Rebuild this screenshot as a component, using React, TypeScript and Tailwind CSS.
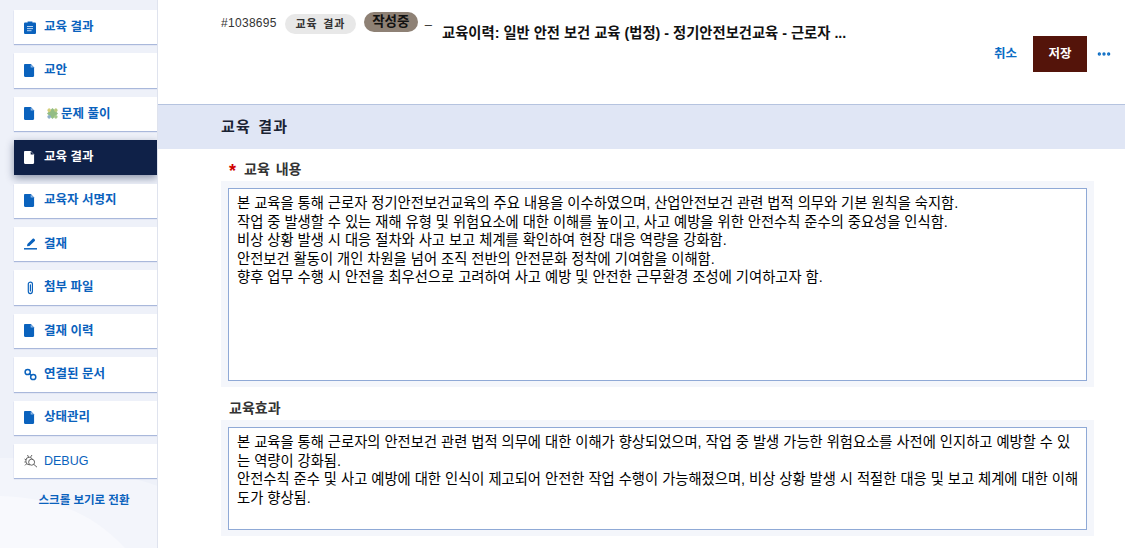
import { MoreHorizontal } from "lucide-react";
import type { ReactNode } from "react";

const font = "font-['Liberation_Sans','Noto_Sans_CJK_KR',sans-serif]";

function FileIcon({ active }: { active?: boolean }) {
  return (
    <svg viewBox="0 0 12 14" className={`w-[11px] h-[13px] ${active ? "fill-white" : "fill-[#0a62bd]"}`}>
      <path d="M1.2 0H7.5L11 3.6V12.8C11 13.5 10.5 14 9.8 14H1.2C.5 14 0 13.5 0 12.8V1.2C0 .5.5 0 1.2 0Z" />
      <path d="M7.3 .4V3.8H10.7Z" className={active ? "fill-[#0f2148]" : "fill-[#8fb6e4]"} />
    </svg>
  );
}

const file = <FileIcon />;

const menu: { label: ReactNode; icon: ReactNode; active?: boolean; debug?: boolean }[] = [
  {
    label: "교육 결과",
    icon: (
      <svg viewBox="0 0 12 13" className="w-[12px] h-[13px]">
        <path d="M1.3 1.6H3.6V.6H8.4V1.6H10.7C11.4 1.6 12 2.1 12 2.8V11.7C12 12.4 11.4 13 10.7 13H1.3C.6 13 0 12.4 0 11.7V2.8C0 2.1.6 1.6 1.3 1.6Z" fill="#0a62bd" />
        <path d="M3 5.5H9M3 7.6H9M3 9.7H7.5" stroke="#b9d3f0" strokeWidth="1" />
      </svg>
    ),
  },
  { label: "교안", icon: file },
  {
    label: (
      <span className="flex items-center">
        <svg viewBox="0 0 13 13" className="w-[13px] h-[13px] ml-[2px] mr-[2px]">
          <g transform="rotate(45 6.5 6.5)">
            <rect x="2.6" y="2.6" width="7.8" height="7.8" fill="#93bd84" />
            <circle cx="6.5" cy="1.8" r="1.8" fill="#b9c97e" />
            <circle cx="11.2" cy="6.5" r="1.8" fill="#a5c98a" />
            <circle cx="6.5" cy="11.2" r="1.8" fill="#8db0c8" />
            <circle cx="1.8" cy="6.5" r="1.8" fill="#d3cf7c" />
          </g>
        </svg>
        문제 풀이
      </span>
    ),
    icon: file,
  },
  { label: "교육 결과", icon: <FileIcon active />, active: true },
  { label: "교육자 서명지", icon: file },
  {
    label: "결재",
    icon: (
      <svg viewBox="0 0 13 12" className="w-[13px] h-[12px]">
        <path d="M3 8.3 3.4 6 8.7.8C9.1.4 9.6.4 10 .8L10.8 1.6C11.2 2 11.2 2.5 10.8 2.9L5.4 8Z" fill="#0a62bd" />
        <path d="M0 10.8H13" stroke="#0a62bd" strokeWidth="1.5" />
      </svg>
    ),
  },
  {
    label: "첨부 파일",
    icon: (
      <svg viewBox="0 0 10 14" className="w-[10px] h-[14px] ml-[1px]" fill="none" stroke="#0a62bd" strokeWidth="1.2" strokeLinecap="round">
        <path d="M3.3 3.8V10.3C3.3 11.4 4 12.6 5.2 12.6S7.4 11.4 7.4 10.3V3C7.4 1.9 6.6 1.1 5.5 1.1S3.3 1.9 3.3 3V3.8M5.4 3.8V10" />
      </svg>
    ),
  },
  { label: "결재 이력", icon: file },
  {
    label: "연결된 문서",
    icon: (
      <svg viewBox="0 0 13 13" className="w-[13px] h-[13px]" fill="none" stroke="#0a62bd" strokeWidth="1.5">
        <circle cx="3.7" cy="4" r="2.6" />
        <circle cx="9.2" cy="9" r="2.6" />
        <path d="M5 5.2 7.8 7.8" />
      </svg>
    ),
  },
  { label: "상태관리", icon: file },
  {
    label: "DEBUG",
    icon: (
      <svg viewBox="0 0 14 14" className="w-[14px] h-[14px]" fill="none" stroke="#555" strokeWidth="0.9">
        <ellipse cx="5.2" cy="7" rx="3.4" ry="3.8" />
        <circle cx="7.6" cy="8.2" r="3" fill="#fff" />
        <path d="M9.8 10.4 13 13.2M3.5 1 4.5 3M8 1 6.6 3M.6 5 2 5.8M.4 8H1.8M1 11.4 2.4 10" />
      </svg>
    ),
    debug: true,
  },
];

const content1 = `본 교육을 통해 근로자 정기안전보건교육의 주요 내용을 이수하였으며, 산업안전보건 관련 법적 의무와 기본 원칙을 숙지함.
작업 중 발생할 수 있는 재해 유형 및 위험요소에 대한 이해를 높이고, 사고 예방을 위한 안전수칙 준수의 중요성을 인식함.
비상 상황 발생 시 대응 절차와 사고 보고 체계를 확인하여 현장 대응 역량을 강화함.
안전보건 활동이 개인 차원을 넘어 조직 전반의 안전문화 정착에 기여함을 이해함.
향후 업무 수행 시 안전을 최우선으로 고려하여 사고 예방 및 안전한 근무환경 조성에 기여하고자 함.`;

const content2 = `본 교육을 통해 근로자의 안전보건 관련 법적 의무에 대한 이해가 향상되었으며, 작업 중 발생 가능한 위험요소를 사전에 인지하고 예방할 수 있는 역량이 강화됨.
안전수칙 준수 및 사고 예방에 대한 인식이 제고되어 안전한 작업 수행이 가능해졌으며, 비상 상황 발생 시 적절한 대응 및 보고 체계에 대한 이해도가 향상됨.`;

function Sidebar() {
  return (
    <aside className="relative w-[158px] h-[548px] shrink-0 bg-[#eef1f9] border-r border-[#dfe3ee] pt-[10px] pl-[14px] overflow-hidden">
      <svg viewBox="0 0 158 90" className="absolute left-0 bottom-0 w-[158px] h-[90px]" preserveAspectRatio="none">
        <path d="M0 0C40 -4 90 6 158 28V90H0Z" fill="#f3f5fb" />
        <path d="M0 38C50 40 90 52 125 90H0Z" fill="#f8f9fd" />
      </svg>
      <nav className="relative flex flex-col gap-[9px]">
        {menu.map((item, i) => (
          <a
            key={i}
            className={`flex items-center h-[34.4px] pl-[10px] text-[12.5px] font-bold ${
              item.active
                ? "bg-[#0f2148] text-white shadow-[0_3px_8px_rgba(15,33,72,0.45)]"
                : "bg-white text-[#0a62bd] shadow-[0_1px_1px_#a9b8db]"
            } ${item.debug ? "font-normal" : ""}`}
          >
            <span className="w-[20px] flex justify-start items-center">{item.icon}</span>
            {item.label}
          </a>
        ))}
      </nav>
      <p className="relative text-center text-[11.5px] font-bold text-[#0a62bd] mt-[14px] pr-[3px]">스크롤 보기로 전환</p>
    </aside>
  );
}

function Field({ label, required, value, height }: { label: string; required?: boolean; value: string; height: string }) {
  return (
    <div>
      <label className="flex items-center h-[20px] pb-[2px] pl-[8px] text-[14px] font-bold text-[#333] [word-spacing:2px]">
        {required && <span className="text-[#d00000] text-[18px] mr-[8px] leading-none mt-[3px]">*</span>}
        {label}
      </label>
      <div className="mt-[1px] bg-[#f4f6fb] p-[7px] pb-[6px]">
        <textarea
          readOnly
          defaultValue={value}
          className={`block w-full ${height} resize-none bg-white border border-[#8fa9d6] pl-[8px] pr-[6px] py-[5px] text-[14.3px] leading-[18.5px] text-black outline-none overflow-hidden`}
        />
      </div>
    </div>
  );
}

export default function App() {
  return (
    <div className={`flex w-[1125px] h-[548px] overflow-hidden bg-white ${font}`}>
      <Sidebar />
      <main className="flex-1 min-w-0">
        <header className="h-[104px] pl-[63px] pr-[13px] pt-[12px]">
          <div className="flex items-start">
            <span className="text-[12px] text-[#333] mt-[2px] tracking-[0.3px]">#1038695</span>
            <span className="ml-[8px] mt-[2px] h-[20px] w-[71px] rounded-full bg-[#e8e8e8] flex items-center justify-center text-[11px] font-bold text-[#333] tracking-[0.8px] [word-spacing:2px]">
              교육 결과
            </span>
            <span className="ml-[8px] h-[20px] w-[54px] rounded-full bg-[#8e8175] flex items-center justify-center text-[13.5px] font-bold text-[#111]">
              작성중
            </span>
            <span className="ml-[7px] text-[13px] text-[#333] mt-[3px]">–</span>
            <h1 className="ml-[10px] mt-[12px] text-[14.3px] leading-[18px] font-bold text-[#111]">
              교육이력: 일반 안전 보건 교육 (법정) - 정기안전보건교육 - 근로자 ...
            </h1>
          </div>
          <div className="flex items-center justify-end mt-[-6px]">
            <button className="text-[12.5px] font-bold text-[#0a6cc4] mr-[16px]">취소</button>
            <button className="w-[54px] h-[36px] bg-[#54140a] text-white text-[12.5px] font-bold">저장</button>
            <MoreHorizontal size={16} strokeWidth={3} className="text-[#0a6cc4] ml-[9px]" />
          </div>
        </header>
        <div className="h-[45px] bg-[#e0e6f5] border-t border-[#b5c3df] flex items-center pl-[63px] text-[15px] font-bold text-[#1a2233] tracking-[1.2px] [word-spacing:2px]">
          교육 결과
        </div>
        <div className="pl-[63px] pr-[31px] pt-[11px] flex flex-col gap-[12px]">
          <Field label="교육 내용" required value={content1} height="h-[193px]" />
          <Field label="교육효과" value={content2} height="h-[103px]" />
        </div>
      </main>
    </div>
  );
}
